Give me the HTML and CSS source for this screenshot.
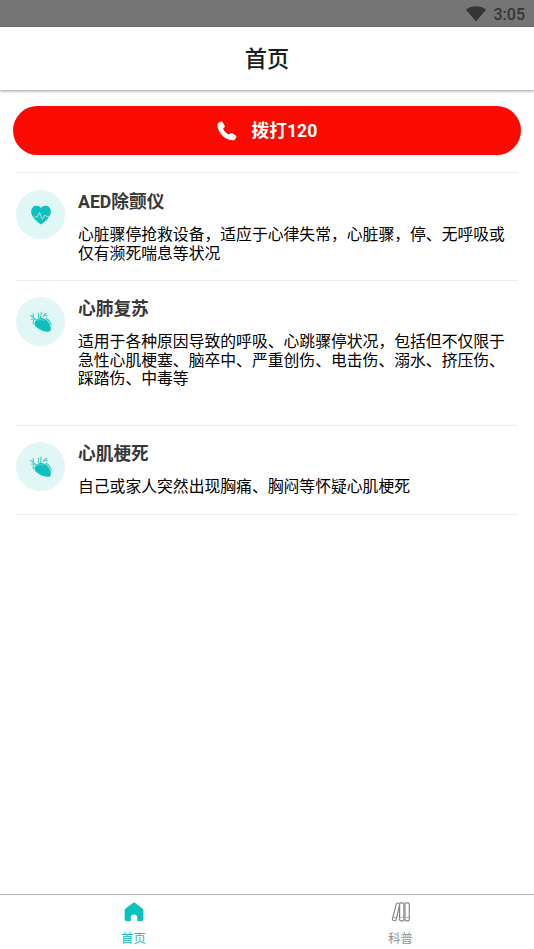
FILE: index.html
```html
<!DOCTYPE html>
<html lang="zh-CN">
<head>
<meta charset="utf-8">
<title>首页</title>
<link rel="stylesheet" href="styles.css">
</head>
<body>
<svg class="defs" width="0" height="0" aria-hidden="true">
  <symbol id="organ" viewBox="0 0 22 22">
    <path d="M6.2 9.2C8.5 6.2 12.6 6.3 15.8 8.5C19.5 11.2 21.4 16 20.8 19.4C19.6 21.3 15.8 21 12.5 19.7C8.2 18.1 4.3 15.2 4.5 12.3C4.6 11 5.3 10.2 6.2 9.2Z" fill="#0fc1be"/>
    <path d="M.6 4.5L3.1 6.1L6 9M3.2 2.5L3.3 5.8M1.4 8L5 8.2M8.3 2L8.8 7M11.2 1.2L10.6 6.7M13.4 5.8C13.8 4 15 3 16.4 2.3M14.3 3.9L17 4.8M3.7 9.3C3 10.7 3 12 3.4 13M16 7.2C18.8 8.7 20.5 11.5 21 14" fill="none" stroke="#35cbc8" stroke-width="1.1" stroke-linecap="round"/>
    <path d="M7 9.6C9 8.1 12 8.4 14 9.5" fill="none" stroke="#7cdedb" stroke-width=".7"/>
  </symbol>
</svg>
<div class="app">
  <div class="status">
    <svg width="20" height="16" viewBox="0 0 20 16"><path d="M0 3.8C5.5-.8 14.5-.8 20 3.8L10 15.6Z" fill="#353535"/></svg>
    <span>3:05</span>
  </div>
  <header class="header"><h1>首页</h1></header>
  <main class="content">
    <button class="call">
      <svg width="20" height="20" viewBox="0 0 20 20"><path d="M1.2 2.1L3.9 .6C4.6.2 5.3.5 5.7 1.2L7.6 4.7C8 5.4 7.8 6 7.3 6.5L6 7.8C7.2 10.2 9.2 12.3 12 13.6L13.5 12.3C14 11.9 14.6 11.8 15.2 12.2L18.8 14.4C19.5 14.9 19.7 15.5 19.3 16.2L17.9 18.4C17.5 19 17 19.2 16.3 19.2C8 19.2.4 11.4.4 3.7C.4 3 .6 2.5 1.2 2.1Z" fill="#fff"/></svg>
      <span>拨打120</span>
    </button>
    <section class="list">
      <article class="item item-aed">
        <div class="badge"><svg width="22" height="22" viewBox="0 0 22 22"><path d="M11 20.6C7.5 17.8 1.2 13.4 1.2 7.4C1.2 1.3 8.2.1 11 4C13.8.1 20.8 1.3 20.8 7.4C20.8 13.4 14.5 17.8 11 20.6Z" fill="#0fc1be"/><path d="M4.3 13H7.4L9.6 8.6L12.3 15.3L15 11L16.2 12.3H19.3" fill="none" stroke="#a8e9e6" stroke-width="1"/></svg></div>
        <div class="text"><h2>AED除颤仪</h2><p>心脏骤停抢救设备，适应于心律失常，心脏骤，停、无呼吸或仅有濒死喘息等状况</p></div>
      </article>
      <article class="item item-cpr">
        <div class="badge"><svg width="22" height="22"><use href="#organ"/></svg></div>
        <div class="text"><h2>心肺复苏</h2><p>适用于各种原因导致的呼吸、心跳骤停状况，包括但不仅限于急性心肌梗塞、脑卒中、严重创伤、电击伤、溺水、挤压伤、踩踏伤、中毒等</p></div>
      </article>
      <article class="item item-mi">
        <div class="badge"><svg width="22" height="22"><use href="#organ"/></svg></div>
        <div class="text"><h2>心肌梗死</h2><p>自己或家人突然出现胸痛、胸闷等怀疑心肌梗死</p></div>
      </article>
    </section>
  </main>
  <nav class="tabs">
    <div class="tab active">
      <svg width="20" height="20" viewBox="0 0 20 20"><path d="M1.6 6.4L8.8.9Q10 .1 11.2.9L18.4 6.4Q19.4 7.2 19.4 8.4V17Q19.4 19.2 17.2 19.2H13.2V15.2Q13.2 12.4 10 12.4Q6.8 12.4 6.8 15.2V19.2H2.8Q.6 19.2.6 17V8.4Q.6 7.2 1.6 6.4Z" fill="#0fc1be"/></svg>
      <span>首页</span>
    </div>
    <div class="tab">
      <svg width="20" height="20" viewBox="0 0 20 20" fill="none" stroke="#858585" stroke-width="1.15"><path d="M5.4 1.8Q5.7.9 6.6 1L8 1.2Q8.8 1.4 8.7 2.2L5.2 17.5Q4.8 18.9 3.7 18.7L2.1 18.3Q1.2 18 1.4 17Z"/><rect x="8.6" y=".8" width="4.3" height="18" rx="1.4"/><rect x="14" y=".8" width="4.3" height="18" rx="1.4"/><path d="M2.3 15L5.3 15.8M9 15.3H12.6M14.4 15.3H18" stroke-width=".7"/></svg>
      <span>科普</span>
    </div>
  </nav>
</div>
</body>
</html>
```
FILE: styles.css
```css
* { box-sizing: border-box; }
body { margin: 0; background: #fff; font-family: Roboto, "Noto Sans CJK SC", sans-serif; color: #000; }
h1, h2, p { margin: 0; }
svg { display: block; flex: none; }
.defs { position: absolute; }
.app { display: flex; flex-direction: column; width: 534px; height: 949px; overflow: hidden; }
.status { flex: none; height: 27px; background: #757575; display: flex; align-items: center; justify-content: flex-end; gap: 8px; padding: 0 9px 0 0; }
.status span { font-size: 16px; font-weight: 500; line-height: 20px; color: #353535; padding-top: 3px; }
.header { flex: none; height: 63px; display: flex; align-items: center; justify-content: center; box-shadow: 0 1px 3px rgba(0, 0, 0, .42); }
.header h1 { font-size: 22.2px; line-height: 30px; font-weight: 500; color: #1c1c1e; }
.content { flex: 1; padding-top: 16px; }
.call { display: flex; align-items: center; justify-content: center; gap: 15px; width: 508px; height: 49px; margin: 0 13px 17px; padding: 0; border: 0; border-radius: 25px; background: #fa0a00; color: #fff; font: 700 17.7px/24px Roboto, "Noto Sans CJK SC", sans-serif; }
.list { margin: 0 16px; border-top: 1px solid #ededed; }
.item { display: flex; gap: 13px; padding-top: 17px; border-bottom: 1px solid #ededed; }
.item-aed { height: 108px; }
.item-cpr { height: 145px; padding-top: 16px; }
.item-mi { height: 89px; padding-top: 16px; }
.badge { flex: none; width: 49px; height: 49px; border-radius: 50%; background: #e1f7f6; display: flex; align-items: center; justify-content: center; }
.text { flex: 1; min-width: 0; }
.text h2 { font-size: 17.7px; line-height: 24px; font-weight: 700; color: #383838; }
.text p { margin-top: 12px; font-size: 15.82px; line-height: 18.5px; }
.tabs { flex: none; height: 55px; display: flex; border-top: 1px solid #b4b4b4; }
.tab { flex: 1; display: flex; flex-direction: column; align-items: center; padding-top: 7px; color: #929292; font-size: 12.4px; line-height: 18px; }
.tab span { margin-top: 8px; }
.tab.active { color: #0fc1be; }
```
